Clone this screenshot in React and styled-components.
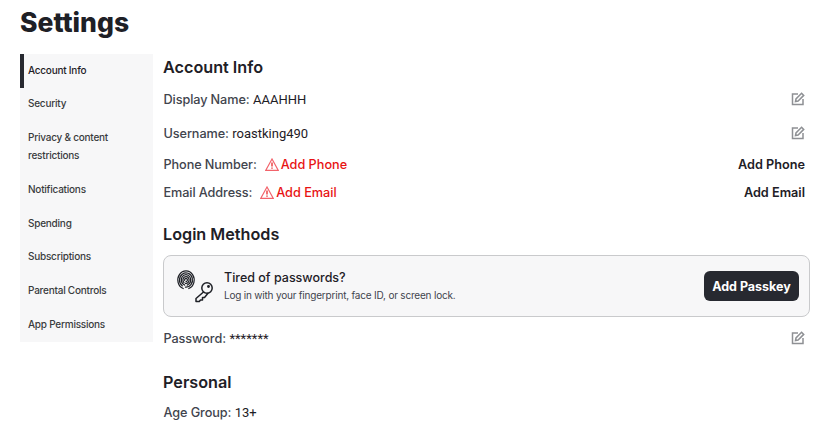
import React from 'react'
import styled, { createGlobalStyle } from 'styled-components'

const Global = createGlobalStyle`
  html, body { margin: 0; padding: 0; background: #fff; overflow: hidden; }
  body { font-family: Inter, "Noto Sans", sans-serif; color: #272930; }
`

const Page = styled.div`
  width: 837px;
  height: 432px;
  overflow: hidden;
  padding: 4px 27px 0 20px;
  box-sizing: border-box;
`

const Title = styled.h1`
  margin: 0 0 14px;
  height: 36px;
  font-size: 26.5px;
  line-height: 36px;
  font-weight: 800;
  color: #1e2026;
`

const Columns = styled.div`
  display: flex;
  align-items: flex-start;
  gap: 10px;
`

const Sidebar = styled.nav`
  width: 133px;
  flex: none;
  background: #f7f7f8;
  display: flex;
  flex-direction: column;
`

const NavItem = styled.div`
  padding: 6.5px 8px 9.3px 8px;
  font-size: 10px;
  letter-spacing: -0.23px;
  line-height: 18px;
  font-weight: 500;
  color: ${p => (p.$active ? '#1e2026' : '#393b3d')};
  box-shadow: ${p => (p.$active ? 'inset 4px 0 0 #272930' : 'none')};
`

const Content = styled.main`
  flex: 1;
  min-width: 0;
  display: flex;
  flex-direction: column;
`

const SectionTitle = styled.h2`
  margin: ${p => p.$top || 0}px 0 0;
  font-size: 16.2px;
  line-height: 26px;
  font-weight: 600;
  color: #1e2026;
`

const Row = styled.div`
  display: flex;
  align-items: center;
  justify-content: space-between;
  height: ${p => p.$height || 34}px;
  padding-right: 5px;
  font-size: 12.7px;
  color: #41444d;
`

const Label = styled.span`
  display: flex;
  align-items: center;
  padding-left: 0.5px;
  font-weight: 500;
  letter-spacing: -0.1px;
`

const Value = styled.span`
  font-family: Roboto, sans-serif;
  font-size: 13px;
  font-weight: 400;
  letter-spacing: 0;
  color: #1e2026;
  margin-left: 3.5px;
`

const Warn = styled.span`
  display: flex;
  align-items: center;
  color: #e81313;
  margin-left: 8px;
  font-weight: 500;
  letter-spacing: 0;
`

const WarnGlyph = styled.svg`
  width: 14px;
  height: 13px;
  margin-right: 2px;
`

const ActionText = styled.span`
  color: #1e2026;
  font-weight: 600;
`

const EditIcon = styled.svg`
  width: 16px;
  height: 16px;
  margin-right: -1px;
`

const Card = styled.div`
  display: flex;
  align-items: center;
  height: 62px;
  box-sizing: border-box;
  padding: 0 10px 0 12px;
  margin-top: 8px;
  background: #f7f7f8;
  border: 1px solid #c9cacc;
  border-radius: 8px;
`

const CardText = styled.div`
  flex: 1;
  margin-left: 10px;
`

const CardTitle = styled.div`
  font-size: 12.5px;
  line-height: 18px;
  margin-bottom: 1px;
  font-weight: 500;
  color: #1e2026;
`

const CardSub = styled.div`
  font-size: 10px;
  letter-spacing: -0.2px;
  line-height: 15px;
  color: #41444d;
`

const Passkey = styled.button`
  height: 30px;
  width: 95px;
  border: none;
  border-radius: 6px;
  background: #272930;
  color: #fff;
  font-family: inherit;
  font-size: 12.5px;
  font-weight: 700;
  padding: 0;
`

const Edit = () => (
  <EditIcon viewBox="0 0 16 16" fill="none" stroke="#8e9094" strokeWidth="1.5">
    <path d="M8 3H2.500v10.500H13V8" />
    <path d="M5.500 10.500l.5-2.600L11.600 2.300l2.100 2.100L8.100 10z" />
  </EditIcon>
)

const WarnIcon = () => (
  <WarnGlyph viewBox="0 0 14 13" fill="none" stroke="#f2636b" strokeWidth="1.2">
    <path d="M7 1L.8 12.300h12.400z" />
    <path d="M7 4.500v4M7 9.500v1.200" stroke="#e81313" />
  </WarnGlyph>
)

// one fingerprint ridge: an open arc round the print's centre
const ridge = (r, from, to) => {
  const pt = a => {
    const t = (a * Math.PI) / 180
    return `${(10 + r * Math.cos(t)).toFixed(2)} ${(11 + r * 1.1 * Math.sin(t)).toFixed(2)}`
  }
  const large = (to - from + 360) % 360 > 180 ? 1 : 0
  return `M${pt(from)}A${r} ${r * 1.1} 0 ${large} 1 ${pt(to)}`
}

const ridges = [
  [8.2, 110, 70],
  [6.5, 125, 95],
  [4.8, 105, 75],
  [3.1, 130, 100],
  [1.4, 170, 90],
]

const PasskeyIcon = () => (
  <svg width="38" height="34" viewBox="0 0 38 34" fill="none" stroke="#1e2026" strokeLinecap="round">
    <g strokeWidth="1.25">
      {ridges.map(([r, from, to]) => <path key={r} d={ridge(r, from, to)} />)}
    </g>
    <g strokeWidth="1.5" strokeLinejoin="round">
      <circle cx="31" cy="19" r="5.200" />
      <circle cx="32.500" cy="17.500" r=".7" />
      <path d="M27.500 23L20 29.500V32.500h3.300l1.200-1.500h2v-2.500h2l3.500-4.300" />
    </g>
  </svg>
)

const navItems = ['Security', 'Privacy & content restrictions', 'Notifications', 'Spending', 'Subscriptions', 'Parental Controls', 'App Permissions']

export default function App() {
  return (
    <Page>
      <Global />
      <Title>Settings</Title>
      <Columns>
        <Sidebar>
          <NavItem $active>Account Info</NavItem>
          {navItems.map(item => <NavItem key={item}>{item}</NavItem>)}
        </Sidebar>
        <Content>
          <SectionTitle>Account Info</SectionTitle>
          <Row $height={38}>
            <Label>Display Name:<Value>AAAHHH</Value></Label>
            <Edit />
          </Row>
          <Row $height={30}>
            <Label>Username:<Value>roastking490</Value></Label>
            <Edit />
          </Row>
          <Row $height={32}>
            <Label>Phone Number:<Warn><WarnIcon />Add Phone</Warn></Label>
            <ActionText>Add Phone</ActionText>
          </Row>
          <Row $height={24}>
            <Label>Email Address:<Warn><WarnIcon />Add Email</Warn></Label>
            <ActionText>Add Email</ActionText>
          </Row>
          <SectionTitle $top={17}>Login Methods</SectionTitle>
          <Card>
            <PasskeyIcon />
            <CardText>
              <CardTitle>Tired of passwords?</CardTitle>
              <CardSub>Log in with your fingerprint, face ID, or screen lock.</CardSub>
            </CardText>
            <Passkey>Add Passkey</Passkey>
          </Card>
          <Row $height={42}>
            <Label>Password:<Value>*******</Value></Label>
            <Edit />
          </Row>
          <SectionTitle $top={10}>Personal</SectionTitle>
          <Row $height={34}>
            <Label>Age Group:<Value>13+</Value></Label>
          </Row>
        </Content>
      </Columns>
    </Page>
  )
}
